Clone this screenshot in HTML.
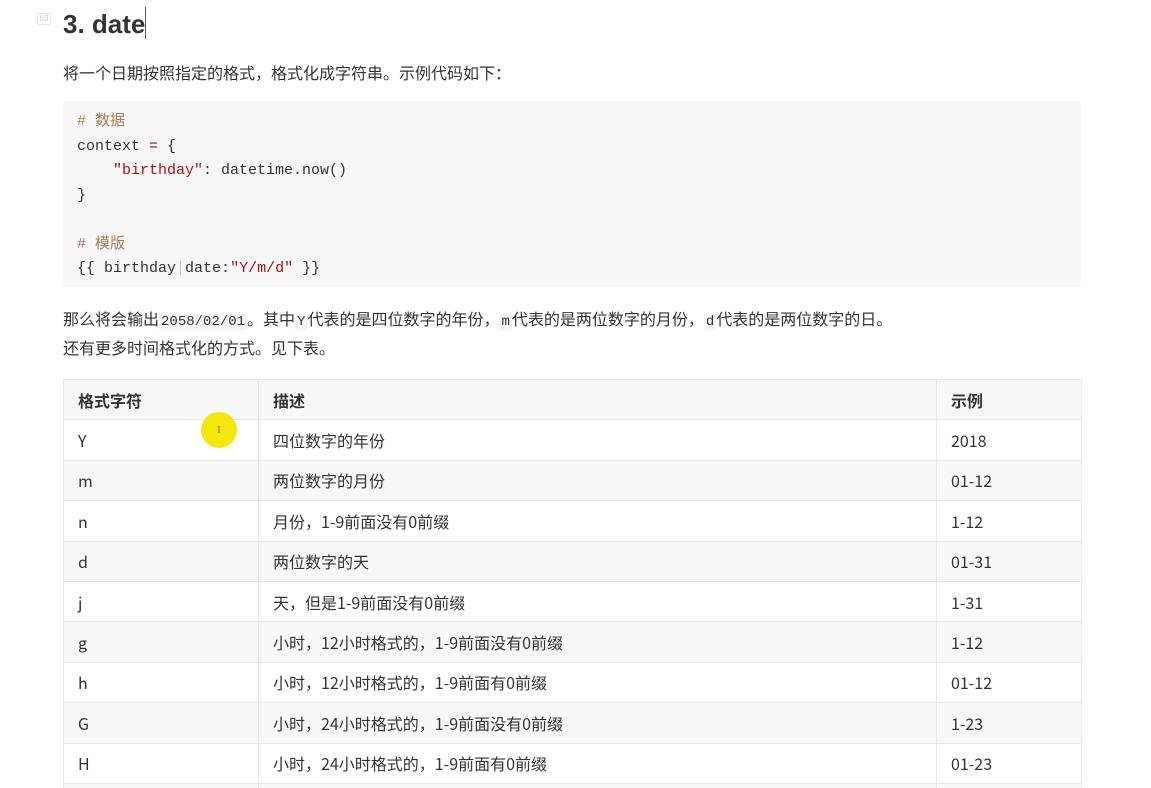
<!DOCTYPE html>
<html><head><meta charset="utf-8"><style>
*{margin:0;padding:0;box-sizing:border-box}
html,body{width:1151px;height:788px;overflow:hidden}
body{background:#fff;font-family:"Noto Sans CJK SC","Liberation Sans",sans-serif;color:#333;position:relative}
.abs{position:absolute}
h3{position:absolute;left:63px;top:4px;font-family:"Liberation Sans",sans-serif;font-size:26px;font-weight:bold;color:#333;line-height:40px}
.cur{display:inline-block;width:1px;height:32px;background:#555;vertical-align:-6px}
.tag{left:37px;top:13px;width:14px;height:12px;border:1px solid #e6e6e6;border-radius:2px;font-size:8px;color:#ccc;text-align:center;line-height:10px;font-family:"Liberation Sans",sans-serif}
p{position:absolute;left:63px;font-size:16px;line-height:24px;color:#333;white-space:nowrap}
.code{left:63px;top:101px;width:1018px;height:186px;background:#f7f7f7;border-radius:3px;padding:9px 14px;font-family:"Liberation Mono","Noto Sans CJK SC",monospace;font-size:15px;line-height:24.5px;color:#333;white-space:pre}
.cm{color:#a67f59}.st{color:#a11}.op{color:#981a1a}
code{font-family:"Liberation Mono",monospace;font-size:14px;background:#f3f4f4;padding:0 2px;color:#333}
table{position:absolute;left:63px;top:379px;width:1019px;border-collapse:collapse;font-size:16px;line-height:20px}
td,th{border:1px solid #e8e8e8;height:40.4px;padding:0 14px;text-align:left;color:#333;vertical-align:middle}
th{font-weight:bold}
tr:nth-child(odd){background:#f8f8f8}
.dot{left:201px;top:412px;width:36px;height:36px;border-radius:50%;background:#f5e60c;font-size:11px;text-align:center;line-height:36px;color:#777;font-family:"Liberation Serif",serif}
</style></head><body>
<div class="abs tag">h3</div>
<h3>3. date<span class="cur"></span></h3>
<p style="top:60px">将一个日期按照指定的格式，格式化成字符串。示例代码如下：</p>
<div class="abs code"><span class="cm"># 数据</span>
context <span class="op">=</span> {
    <span class="st">"birthday"</span>: datetime.now()
}

<span class="cm"># 模版</span>
{{ birthday<span style="color:#ccc">|</span>date:<span class="st">"Y/m/d"</span> }}</div>
<p style="top:306px">那么将会输出<code>2058/02/01</code>。其中<code>Y</code>代表的是四位数字的年份，<code>m</code>代表的是两位数字的月份，<code>d</code>代表的是两位数字的日。</p>
<p style="top:335px">还有更多时间格式化的方式。见下表。</p>
<table>
<colgroup><col style="width:195px"><col style="width:678px"><col></colgroup>
<tr><th>格式字符</th><th>描述</th><th>示例</th></tr>
<tr><td>Y</td><td>四位数字的年份</td><td>2018</td></tr>
<tr><td>m</td><td>两位数字的月份</td><td>01-12</td></tr>
<tr><td>n</td><td>月份，1-9前面没有0前缀</td><td>1-12</td></tr>
<tr><td>d</td><td>两位数字的天</td><td>01-31</td></tr>
<tr><td>j</td><td>天，但是1-9前面没有0前缀</td><td>1-31</td></tr>
<tr><td>g</td><td>小时，12小时格式的，1-9前面没有0前缀</td><td>1-12</td></tr>
<tr><td>h</td><td>小时，12小时格式的，1-9前面有0前缀</td><td>01-12</td></tr>
<tr><td>G</td><td>小时，24小时格式的，1-9前面没有0前缀</td><td>1-23</td></tr>
<tr><td>H</td><td>小时，24小时格式的，1-9前面有0前缀</td><td>01-23</td></tr>
<tr><td>&nbsp;</td><td></td><td></td></tr>
</table>
<div class="abs dot">I</div>
</body></html>
